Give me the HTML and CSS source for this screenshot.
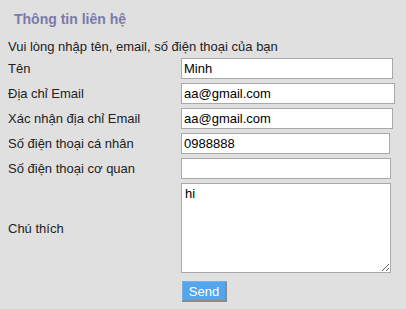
FILE: index.html
```html
<!DOCTYPE html>
<html lang="vi">
<head>
<meta charset="utf-8">
<title>Thông tin liên hệ</title>
<link rel="stylesheet" href="styles.css">
</head>
<body>
<div class="contact">
  <h2 class="title">Thông tin liên hệ</h2>
  <p class="intro">Vui lòng nhập tên, email, số điện thoại của bạn</p>
  <form class="grid">
    <label class="lbl" for="f-name">Tên</label>
    <input class="field w-name" id="f-name" type="text" value="Minh">
    <label class="lbl" for="f-email">Địa chỉ Email</label>
    <input class="field w-email" id="f-email" type="text" value="aa@gmail.com">
    <label class="lbl" for="f-email2">Xác nhận địa chỉ Email</label>
    <input class="field w-confirm" id="f-email2" type="text" value="aa@gmail.com">
    <label class="lbl" for="f-phone">Số điện thoại cá nhân</label>
    <input class="field w-phone" id="f-phone" type="text" value="0988888">
    <label class="lbl" for="f-office">Số điện thoại cơ quan</label>
    <input class="field w-office" id="f-office" type="text" value="">
    <label class="lbl" for="f-note">Chú thích</label>
    <textarea class="field note" id="f-note">hi</textarea>
    <span class="spacer"></span>
    <button class="send" type="button">Send</button>
  </form>
</div>
</body>
</html>
```
FILE: styles.css
```css
html, body {
  margin: 0;
  padding: 0;
  background: #e0e0e0;
}
body {
  font-family: "Liberation Sans", Arial, sans-serif;
  font-size: 13px;
  color: #222;
}
.contact {
  padding: 11px 8px 0 8px;
}
.title {
  margin: 0;
  padding-left: 6px;
  font-size: 14px;
  line-height: 16px;
  font-weight: bold;
  color: #7a7aa9;
}
.intro {
  margin: 12px 0 0 0;
  line-height: 15px;
}
.grid {
  margin: 4px 0 0 0;
  display: grid;
  grid-template-columns: 173px auto;
  row-gap: 4px;
  align-items: center;
  justify-items: start;
}
.lbl {
  line-height: 15px;
}
.field {
  box-sizing: border-box;
  height: 21px;
  margin: 0;
  padding: 0 2px;
  border: 1px solid #a9a9a9;
  background: #fff;
  font-family: "Liberation Sans", Arial, sans-serif;
  font-size: 13px;
  color: #000;
  outline: none;
}
.w-name { width: 212px; }
.w-email { width: 214px; }
.w-confirm { width: 212px; }
.w-phone { width: 209px; }
.w-office { width: 210px; }
.note {
  width: 210px;
  height: 90px;
  padding: 2px 3px;
  resize: both;
  line-height: 15px;
}
.send {
  margin-top: 4px;
  margin-left: 1px;
  box-sizing: border-box;
  width: 45px;
  height: 21px;
  padding: 0;
  background: #55a5ec;
  border-style: solid;
  border-width: 1px 2px 2px 1px;
  border-color: #6db4f0 #8a8a8a #8a8a8a #6db4f0;
  color: #fff;
  font-family: "Liberation Sans", Arial, sans-serif;
  font-size: 13px;
  line-height: 17px;
}
```
